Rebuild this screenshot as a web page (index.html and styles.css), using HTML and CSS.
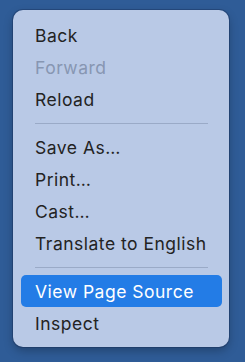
FILE: index.html
```html
<!DOCTYPE html>
<html lang="en">
<head>
    <meta charset="UTF-8">
    <meta name="viewport" content="width=device-width, initial-scale=1.0">
    <title>Context Menu</title>
    <link rel="stylesheet" href="styles.css">
</head>
<body>
    <div class="menu">
        <div class="menu-item">Back</div>
        <div class="menu-item disabled">Forward</div>
        <div class="menu-item">Reload</div>
        <div class="separator"></div>
        <div class="menu-item">Save As…</div>
        <div class="menu-item">Print…</div>
        <div class="menu-item">Cast…</div>
        <div class="menu-item">Translate to English</div>
        <div class="separator"></div>
        <div class="menu-item active">View Page Source</div>
        <div class="menu-item">Inspect</div>
    </div>
</body>
</html>
```

FILE: styles.css
```css
body {
    margin: 0;
    height: 100vh;
    background-color: #2f5c97;
    font-family: Inter, "Noto Sans", sans-serif;
}
.menu {
    margin: 10px 0 0 13px;
    width: 216px;
    box-sizing: border-box;
    padding: 9px 0 8px;
    background: #b9c9e6;
    border-radius: 10px;
    box-shadow: 0 0 0 1px rgba(20, 40, 80, 0.35), 0 4px 10px rgba(0, 0, 0, 0.25);
}
.menu-item {
    height: 32px;
    line-height: 34px;
    margin: 0 7px 0 8px;
    padding-left: 14px;
    border-radius: 5px;
    font-size: 17.5px;
    letter-spacing: 0.5px;
    color: #232323;
}
.menu-item.disabled {
    color: #8796b2;
}
.menu-item.active {
    background-color: #237ce6;
    color: #ffffff;
}
.separator {
    height: 1px;
    margin: 8px 21px 7px 22px;
    background-color: #9aaac7;
}
```
